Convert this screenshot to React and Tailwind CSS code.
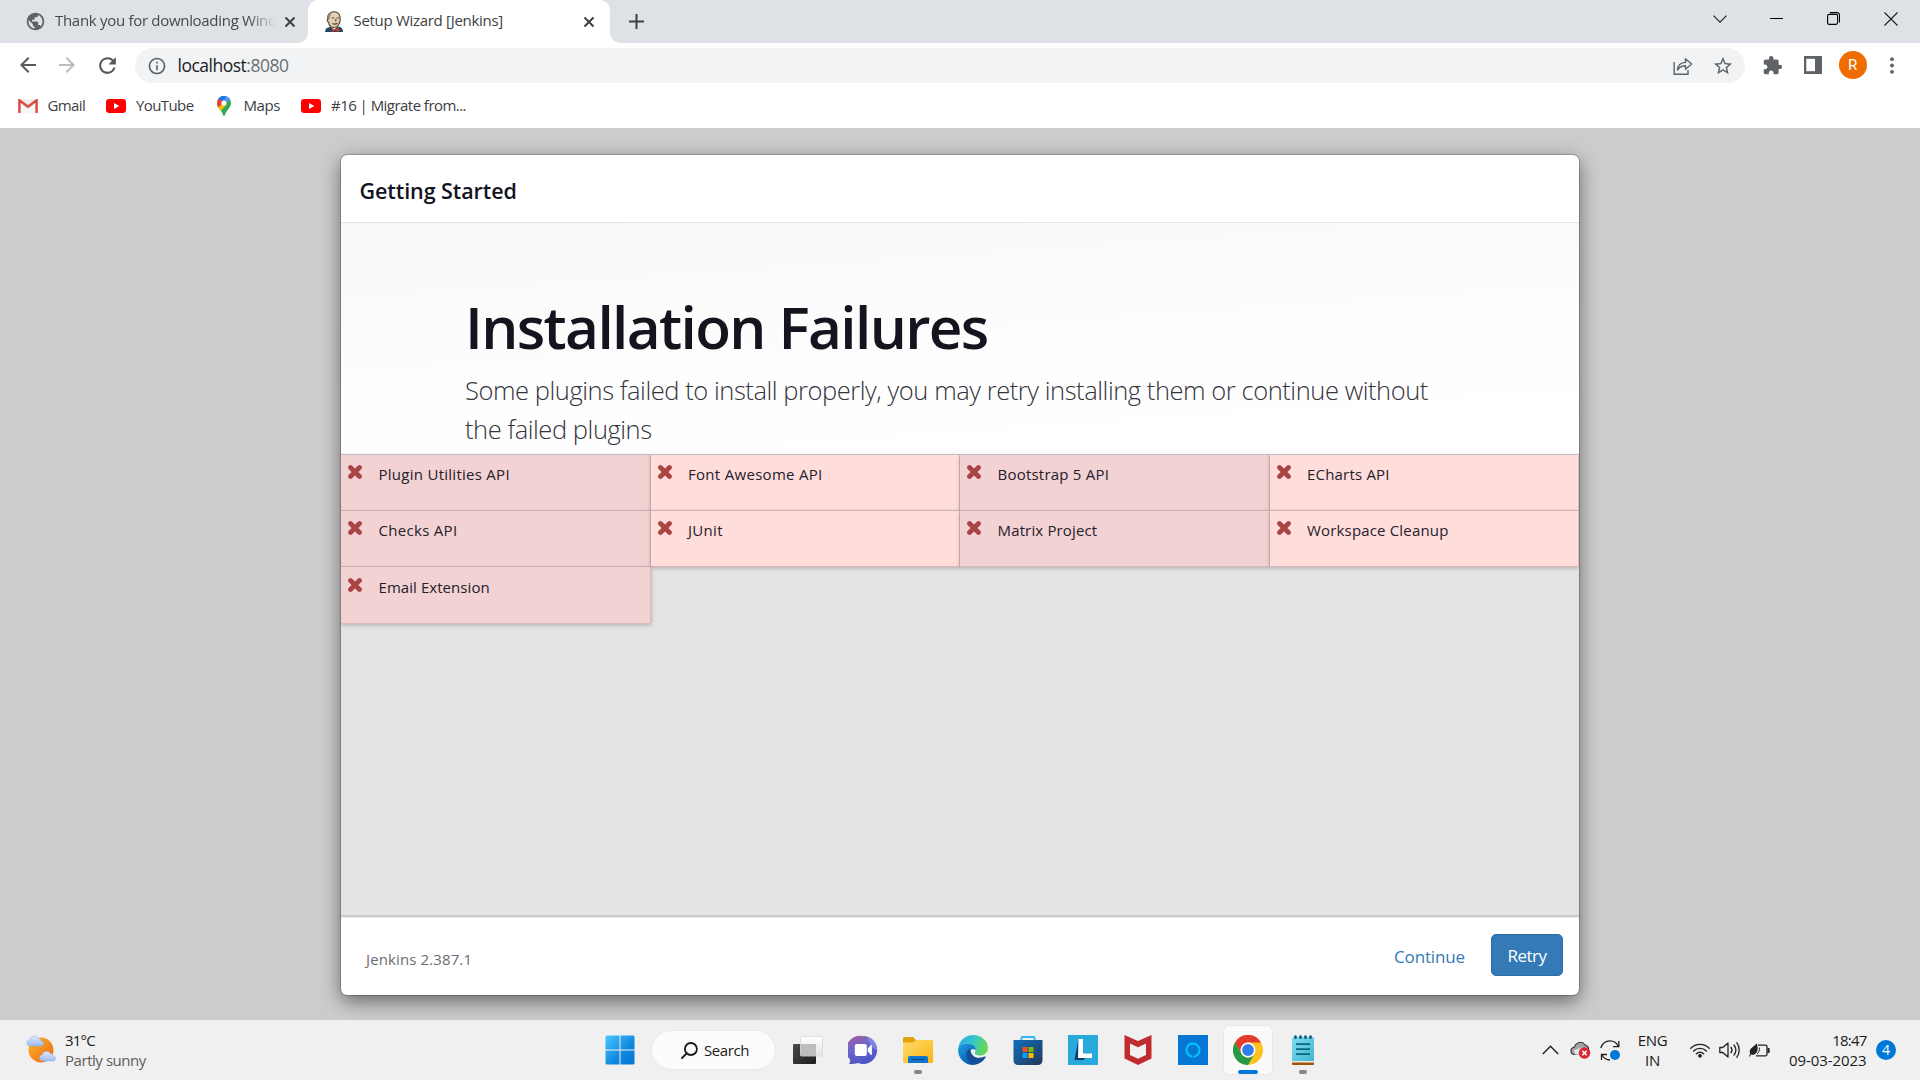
import React from 'react';
import { MdArrowBack, MdArrowForward, MdRefresh, MdInfoOutline, MdPublic, MdStarBorder, MdExtension } from 'react-icons/md';

/* ---------- Browser icons ---------- */

const CloseX = () => (
  <svg width="12" height="12" viewBox="0 0 12 12" fill="none" stroke="#3c4043" strokeWidth="2">
    <path d="M1.500 1.500l9 9M10.500 1.500l-9 9" />
  </svg>
);

const JenkinsFace = () => (
  <svg width="20" height="21" viewBox="0 0 20 21">
    <path d="M1 21c0-3 2-4.500 5-5l8-.5c3 .5 5 2 5 5.500z" fill="#274a5a" />
    <path d="M6 15l4 4 4-4-1-2H7z" fill="#f4f4f0" />
    <path d="M3.500 8.500C3 3.500 6 .8 10 .8s6.600 2.700 6.200 7.500c-.1 4.500-2.500 8-6 8.200-3.700 0-5.400-3-5.700-5.500-1.200-.3-1.500-2-1-2.500z" fill="#e6cfb0" stroke="#443c36" strokeWidth="1.100" />
    <path d="M3.500 8.500C2.800 4 5 1.200 9 .9 6.500 2.500 6 5 5.500 8.500z" fill="#8c8378" />
    <path d="M8 7h2.200M12.500 7h2.200M8.500 12.500c1.500.8 3.500.8 4.800-.2M11.800 8v2.500" stroke="#443c36" strokeWidth="1.100" fill="none" />
    <path d="M8 17l3 1.600 4-2v4.400l-4-1.400-3 1.400z" fill="#d33833" />
  </svg>
);

const Gmail = () => (
  <svg width="20" height="14" viewBox="0 0 20 14">
    <rect x="1" y="0.500" width="18" height="13" fill="#ececec" />
    <path d="M3 14V5l7 5 7-5v9z" fill="#f6f6f6" />
    <path d="M1.400 14V1.200L10 7.800l8.600-6.600V14" fill="none" stroke="#dd4b3e" strokeWidth="2.400" />
  </svg>
);

const YouTube = () => (
  <svg width="20" height="14" viewBox="0 0 20 14">
    <rect width="20" height="14" rx="3.200" fill="#f00" />
    <path d="M8 4l5.400 3L8 10z" fill="#fff" />
  </svg>
);

const MapsPin = () => (
  <svg width="14" height="20" viewBox="0 0 14 20">
    <clipPath id="pin"><path d="M7 0a7 7 0 0 1 7 7c0 3-1.600 4.900-3.300 7-1.500 1.800-2.400 3.500-2.800 5.200-.3 1.100-1.500 1.100-1.800 0C5.700 17.500 4.800 15.800 3.300 14 1.600 11.900 0 10 0 7a7 7 0 0 1 7-7z" /></clipPath>
    <g clipPath="url(#pin)">
      <rect width="14" height="20" fill="#34a853" />
      <path d="M0 0h14v3L7 7 1.500 2.500z" fill="#4285f4" />
      <path d="M9 0h5v5L9.500 5z" fill="#5b97f5" />
      <path d="M0 1.500L1.800 2.300 7 7l-5.600 5.500L0 11z" fill="#ea4335" />
      <path d="M7 7l2 2-6.500 7.500L0 12z" fill="#fbbc04" />
      <path d="M0 0h9L5 5 1.500 2.500z" fill="#1a73e8" />
    </g>
    <circle cx="7" cy="7" r="2.600" fill="#fff" />
  </svg>
);

const Share = () => (
  <svg width="20" height="18" viewBox="0 0 20 18" fill="none" stroke="#5f6368" strokeWidth="1.400">
    <path d="M1.200 5v12.200H15V13" />
    <path d="M4.500 13c.3-4.500 3-7.300 8-7.600V1.700L18.600 7l-6.100 5.200V8.800c-3.600 0-6 1.200-8 4.200z" strokeLinejoin="round" />
  </svg>
);

const SidePanel = () => (
  <svg width="18" height="18" viewBox="0 0 18 18">
    <path d="M0 0h18v18H0z" fill="#5f6368" />
    <path d="M2.300 2.800h8.700v12.400H2.300z" fill="#fff" />
  </svg>
);

/* ---------- Taskbar icons ---------- */

const Weather = () => (
  <svg width="30" height="28" viewBox="0 0 30 28">
    <defs>
      <linearGradient id="sun" x1="0" y1="0" x2="1" y2="1"><stop offset="0" stopColor="#fbb72c" /><stop offset="1" stopColor="#ee6510" /></linearGradient>
      <linearGradient id="cloud" x1="0" y1="0" x2="0" y2="1"><stop offset="0" stopColor="#dfe9fb" /><stop offset="1" stopColor="#9dbbf0" /></linearGradient>
    </defs>
    <circle cx="15" cy="15" r="12.500" fill="url(#sun)" />
    <path d="M3.500 11a3.200 3.200 0 0 1 .2-6.300C5 0 11 .2 12.300 3.500c2 0 2.700 1.300 2.700 2.500 3.500.3 3.200 5 0 5z" fill="url(#cloud)" stroke="#88a9e6" strokeWidth=".5" />
    <path d="M16 26a3.200 3.200 0 0 1 .2-6.300c1.300-4.400 6.600-4.200 8.100-1.200 2 0 2.500 1.300 2.700 2.500 3.500.3 3 5 0 5z" fill="url(#cloud)" stroke="#88a9e6" strokeWidth=".5" />
  </svg>
);

const WindowsLogo = () => (
  <svg width="30" height="30" viewBox="0 0 30 30">
    <defs><linearGradient id="win" gradientUnits="userSpaceOnUse" x1="0" y1="0" x2="30" y2="30"><stop offset="0" stopColor="#4cc8fb" /><stop offset=".6" stopColor="#0f87e0" /><stop offset="1" stopColor="#0574d2" /></linearGradient></defs>
    <path d="M2 .5h12.500v14H.5V2A1.500 1.500 0 0 1 2 .5zM15.500.5H28A1.500 1.500 0 0 1 29.500 2v12.500h-14zM.5 15.500h14v14H2A1.500 1.500 0 0 1 .5 28zM15.500 15.500h14V28a1.500 1.500 0 0 1-1.500 1.500H15.500z" fill="url(#win)" />
  </svg>
);

const TaskView = () => (
  <svg width="30" height="28" viewBox="0 0 30 28">
    <defs>
      <linearGradient id="tvd" x1="0" y1="0" x2="1" y2="1"><stop offset="0" stopColor="#4a4a48" /><stop offset="1" stopColor="#1d1d1d" /></linearGradient>
      <linearGradient id="tvl" x1="0" y1="0" x2="0" y2="1"><stop offset="0" stopColor="#fff" /><stop offset="1" stopColor="#e2e2e2" /></linearGradient>
    </defs>
    <rect x="0" y="8" width="23" height="20" rx="1" fill="url(#tvd)" />
    <rect x="7.500" y="0.500" width="22" height="19.500" rx="1" fill="url(#tvl)" stroke="#d8d8d8" strokeWidth=".8" />
    <path d="M8 8h15v12H8z" fill="#bdbdbd" />
  </svg>
);

const Chat = () => (
  <svg width="30" height="30" viewBox="0 0 30 30">
    <defs><linearGradient id="chat" x1=".1" y1="0" x2=".5" y2="1"><stop offset="0" stopColor="#a35f9d" /><stop offset=".5" stopColor="#6a66cc" /><stop offset="1" stopColor="#4f55c5" /></linearGradient></defs>
    <path d="M15 1a14 14 0 1 1-5 27c-2.500.8-5 1-8.800 1 .8-1.500 1-3 .8-4.500A14 14 0 0 1 15 1z" fill="url(#chat)" />
    <path d="M19 1.500A14 14 0 0 1 29 15c-4-1-8-6-10-13.500z" fill="#8093ee" opacity=".75" />
    <rect x="6.800" y="9" width="12" height="12" rx="2" fill="#fff" />
    <path d="M20.300 13.500l3-3.300v9.600l-3-3.300z" fill="#fff" stroke="#fff" strokeLinejoin="round" />
  </svg>
);

const Folder = () => (
  <svg width="30" height="28" viewBox="0 0 30 28">
    <defs><linearGradient id="fold" x1="0" y1="0" x2="1" y2="1"><stop offset="0" stopColor="#ffdc70" /><stop offset="1" stopColor="#fbb50d" /></linearGradient></defs>
    <path d="M0 8V2.500A1.500 1.500 0 0 1 1.500 1H10l3 3h15.500A1.500 1.500 0 0 1 30 5.500V8z" fill="#e2a009" />
    <path d="M0 6.500h10L13.500 4H30v22a1 1 0 0 1-1 1H1a1 1 0 0 1-1-1z" fill="url(#fold)" />
    <path d="M5 27v-5a2 2 0 0 1 2-2h16a2 2 0 0 1 2 2v5z" fill="#1276cf" />
    <path d="M8.500 23.500h13" stroke="#0a4f93" strokeWidth="1.300" />
  </svg>
);

const Edge = () => (
  <svg width="30" height="30" viewBox="0 0 30 30">
    <defs>
      <linearGradient id="e1" x1="0" y1=".2" x2="1" y2=".5"><stop offset="0" stopColor="#27a7e8" /><stop offset=".5" stopColor="#36c9cb" /><stop offset="1" stopColor="#68d84c" /></linearGradient>
      <linearGradient id="e2" x1="0" y1="0" x2=".6" y2="1"><stop offset="0" stopColor="#1d9fe4" /><stop offset="1" stopColor="#0b5cae" /></linearGradient>
    </defs>
    <path d="M.3 13C1.300 5.500 7.500 0 15 0c8.500 0 15 6.200 15 12.800 0 4.500-3.300 7.700-7.600 7.700-3.400 0-5.700-1.200-5.700-2.600 0-.8 1.100-1.300 1.100-3.400 0-3.800-4-6-8.800-6C5 8.500 2 10.300.3 13z" fill="url(#e1)" />
    <path d="M.1 15C.3 11 4 8.500 9 8.500c4.800 0 8.800 2.200 8.800 6 0 .3 0 .6-.1.900C16.500 13.800 11 13.500 10 18.500c-.8 5 3.500 9.800 8 10.800-1 .5-2 .7-3 .7C6.500 30 0 23 .1 15z" fill="url(#e2)" />
    <path d="M12.500 13c-3.500 2-4.800 5.500-4 8.500 1 4.500 5 8 9.500 7.900 4-1 7.500-3.600 9.500-7 .4-.8-.3-1.200-1-.9-7 3.300-14.500.3-14-8.500z" fill="#134e96" />
  </svg>
);

const Store = () => (
  <svg width="30" height="30" viewBox="0 0 30 30">
    <defs><linearGradient id="store" x1="0" y1="0" x2="1" y2="1"><stop offset="0" stopColor="#0d6fbf" /><stop offset="1" stopColor="#243757" /></linearGradient></defs>
    <path d="M8.300 6V3.500A1.500 1.500 0 0 1 9.800 2h10.400a1.500 1.500 0 0 1 1.500 1.500V6" fill="none" stroke="#2cb5f4" strokeWidth="1.800" />
    <path d="M.5 5h29v20.500a4.500 4.500 0 0 1-4.500 4.500H5a4.500 4.500 0 0 1-4.500-4.500z" fill="url(#store)" />
    <path d="M9.500 12h5v5h-5z" fill="#f25022" /><path d="M15.500 12h5v5h-5z" fill="#7fba00" />
    <path d="M9.500 18h5v5h-5z" fill="#00a4ef" /><path d="M15.500 18h5v5h-5z" fill="#ffb900" />
  </svg>
);

const LenovoL = () => (
  <svg width="30" height="30" viewBox="0 0 30 30">
    <path d="M0 0h30v30H0z" fill="#27aadb" />
    <path d="M10.500 4L6.500 25h9l2-2.500H11z" fill="#0f3b68" />
    <path d="M10.500 4H15v14.500h9V23H10z" fill="#fff" />
  </svg>
);

const McAfee = () => (
  <svg width="28" height="30" viewBox="0 0 28 30">
    <path d="M.5 0L14 6 27.500 0v23.500L14 30 .5 23.500zM6 8.500V20l8 3.800 8-3.800V8.500l-8 3.800z" fill="#bf2b2e" fillRule="evenodd" />
  </svg>
);

const Alexa = () => (
  <svg width="30" height="30" viewBox="0 0 30 30">
    <path d="M0 0h30v30H0z" fill="#0578d6" />
    <path d="M14.200 21.500a6.500 6.500 0 1 1 2.600-.2l-1.300 1" fill="none" stroke="#05c8fb" strokeWidth="1.900" />
  </svg>
);

const Chrome = () => (
  <svg width="30" height="30" viewBox="0 0 30 30">
    <circle cx="15" cy="15" r="15" fill="#fcc31e" />
    <path d="M2 7.500A15 15 0 0 1 28 7.500H15A7.500 7.500 0 0 0 8.500 18.750z" fill="#e33b2e" />
    <path d="M2 7.500A15 15 0 0 0 15 30L21.500 18.750A7.500 7.500 0 0 1 8.500 18.750z" fill="#279847" />
    <circle cx="15" cy="15" r="7.400" fill="#fff" />
    <circle cx="15" cy="15" r="5.900" fill="#2f7ced" />
  </svg>
);

const Notepad = () => (
  <svg width="22" height="30" viewBox="0 0 22 30">
    <defs><linearGradient id="note" x1="0" y1="0" x2="1" y2="1"><stop offset="0" stopColor="#80dcee" /><stop offset="1" stopColor="#3fb6d3" /></linearGradient></defs>
    <path d="M0 26h22v3a1 1 0 0 1-1 1H1a1 1 0 0 1-1-1z" fill="#a1520b" />
    <path d="M0 25h22v2.500H0z" fill="#f3ead9" />
    <path d="M0 3.500A1.500 1.500 0 0 1 1.500 2h19A1.500 1.500 0 0 1 22 3.500V26H0z" fill="url(#note)" />
    <path d="M3.500 1.500v1.200M8.500 1.500v1.200M13.500 1.500v1.200M18.500 1.500v1.200" stroke="#0d5a74" strokeWidth="2.600" strokeLinecap="round" />
    <path d="M4 9.200h14M4 14.200h14M4 19.200h14" stroke="#0b6680" strokeWidth="1.700" />
  </svg>
);

const CloudError = () => (
  <svg width="21" height="18" viewBox="0 0 21 18">
    <path d="M5 13.500C0 13.500-.5 7 4.200 6.200 6 1 12.500-.5 15 4c3.500.5 4.500 4 3 7z" fill="#a3a3a3" stroke="#333" strokeWidth="1.100" />
    <path d="M4 9l9-2.500 4 3-3 4H5z" fill="#e6e6e6" />
    <circle cx="14.500" cy="12" r="5.800" fill="#d92632" />
    <path d="M12.300 9.800l4.400 4.400M16.700 9.800l-4.400 4.400" stroke="#fff" strokeWidth="1.500" />
  </svg>
);

const Sync = () => (
  <svg width="20" height="21" viewBox="0 0 20 21" fill="none" stroke="#222" strokeWidth="1.300">
    <path d="M.8 8C2.500 2.500 6 .8 10 .8c4 0 7 2.500 8.500 5.700M18.800 1v5.700H13" />
    <path d="M1.500 20v-5.500H7M2 15c1.500 3 4.500 4.800 8 5" />
    <circle cx="15" cy="15" r="5" fill="#0078d7" stroke="none" />
  </svg>
);

const Wifi = () => (
  <svg width="20" height="16" viewBox="0 0 20 16" fill="none" stroke="#222" strokeWidth="1.400" strokeLinecap="round">
    <path d="M.8 6.200a13 13 0 0 1 18.400 0M3.600 9a9 9 0 0 1 12.800 0M6.400 11.700a5.100 5.100 0 0 1 7.200 0" />
    <circle cx="10" cy="13.800" r="1.200" fill="#222" stroke="#222" />
  </svg>
);

const Speaker = () => (
  <svg width="21" height="18" viewBox="0 0 21 18" fill="none" stroke="#222" strokeWidth="1.300" strokeLinecap="round" strokeLinejoin="round">
    <path d="M.8 6.500v5h3L9 16V2L3.800 6.500z" />
    <path d="M12 6.300c1.200 1.600 1.200 3.800 0 5.400M15 4c2.300 3 2.300 7 0 10M17.800 1.700c3.200 4.300 3.200 10.300 0 14.600" />
  </svg>
);

const Battery = () => (
  <svg width="21" height="15" viewBox="0 0 21 15">
    <path d="M9 2.200h7.500a1.500 1.500 0 0 1 1.500 1.500v7.600a1.500 1.500 0 0 1-1.500 1.500H7" fill="none" stroke="#222" strokeWidth="1.300" />
    <path d="M18.500 5h1.200a1 1 0 0 1 1 1v3a1 1 0 0 1-1 1h-1.200z" fill="#222" />
    <path d="M7.800.3c1.200 4 1.500 9.500-2.600 11.300-1.300.5-2.500.2-3.200-.3L.8 14l-.6-1 1-2.400C-.8 5.500 4.500 4.500 7.800.3z" fill="#222" />
    <path d="M10.300 4.500c.3 3-.4 5-2.300 6.500" stroke="#222" fill="none" />
  </svg>
);

/* ---------- Data ---------- */

const plugins = [
  ['Plugin Utilities API', 'tracking-[0.27px]'],
  ['Font Awesome API', 'tracking-[0.3px]'],
  ['Bootstrap 5 API', 'tracking-[0.22px]'],
  ['ECharts API', 'tracking-[0.2px]'],
  ['Checks API', 'tracking-[0.3px]'],
  ['JUnit', 'tracking-[0.3px]'],
  ['Matrix Project', 'tracking-[0.15px]'],
  ['Workspace Cleanup', 'tracking-[0.17px]'],
  ['Email Extension', 'tracking-[0.06px]'],
];

const FailedMark = () => (
  <svg className="mt-px shrink-0" width="14" height="14" viewBox="0 0 14 14" stroke="#a94442" strokeWidth="4.700" strokeLinecap="round">
    <path d="M2.500 2.500l9 9M11.500 2.500l-9 9" />
  </svg>
);

/* ---------- Regions ---------- */

function TabBar() {
  return (
    <div className="flex h-[43px] bg-[#dee1e6]">
      <div className="flex w-[308px] items-center pl-[26px]">
        <MdPublic size={21} color="#5f6368" className="-ml-px" />
        <div className="-mt-[2px] ml-[9px] w-[225px] whitespace-nowrap text-[15px] tracking-[-0.3px] text-[#45494d] [mask-image:linear-gradient(to_right,#000_86%,transparent_98%)]">
          Thank you for downloading Wind
        </div>
        <div className="ml-[4px]"><CloseX /></div>
      </div>
      <div className="relative flex w-[302px] items-center rounded-t-[10px] bg-white pl-[16px]">
        <span className="absolute -left-[10px] bottom-0 size-[10px] bg-[radial-gradient(circle_at_0_0,transparent_9.5px,#fff_10px)]" />
        <span className="absolute -right-[10px] bottom-0 size-[10px] bg-[radial-gradient(circle_at_100%_0,transparent_9.5px,#fff_10px)]" />
        <JenkinsFace />
        <span className="-mt-[2px] ml-[9.500px] grow text-[15px] tracking-[-0.3px] text-[#3c4043]">Setup Wizard [Jenkins]</span>
        <div className="mr-[15px]"><CloseX /></div>
      </div>
      <svg className="ml-[18.500px] mt-[14px]" width="15" height="15" viewBox="0 0 15 15" stroke="#3c4043" strokeWidth="2"><path d="M7.500 0v15M0 7.500h15" /></svg>
      <div className="ml-auto mr-[22px] flex h-[37px] items-center text-[#1b1b1b]">
        <svg width="14" height="8" viewBox="0 0 14 8" fill="none" stroke="currentColor" strokeWidth="1.100"><path d="M.5.7L7 7.200 13.500.7" /></svg>
        <svg className="ml-[43px]" width="13" height="13" viewBox="0 0 13 13" stroke="#000" strokeWidth="1"><path d="M0 6.500h13" /></svg>
        <svg className="ml-[44px]" width="13" height="13" viewBox="0 0 13 13" fill="none" stroke="#000" strokeWidth="1.100">
          <rect x=".6" y="2.400" width="10" height="10" rx="1.600" /><path d="M2.800.6h7.400a2.300 2.300 0 0 1 2.300 2.300v7.600" />
        </svg>
        <svg className="ml-[44px]" width="14" height="14" viewBox="0 0 14 14" stroke="currentColor" strokeWidth="1.100"><path d="M.5.5l13 13M13.500.5l-13 13" /></svg>
      </div>
    </div>
  );
}

function Toolbar() {
  return (
    <div className="flex h-[45px] items-center">
      <MdArrowBack size={24} color="#55595e" className="-mt-px ml-[15.500px] shrink-0" />
      <MdArrowForward size={24} color="#babcbe" className="-mt-px ml-[15.500px] shrink-0" />
      <MdRefresh size={25} color="#55595e" className="-mt-px ml-[16px] shrink-0" />
      <div className="ml-[15px] flex h-[35px] w-[1610px] items-center rounded-full bg-[#f1f3f4] pl-[12px]">
        <MdInfoOutline size={20} color="#5f6368" />
        <span className="ml-[10.500px] text-[17.5px] tracking-[-0.5px] text-[#202124]">localhost<span className="text-[#6b6f73]">:8080</span></span>
        <div className="ml-auto mr-[11.500px] flex items-center gap-[18.500px]">
          <Share />
          <MdStarBorder size={22} color="#5f6368" />
        </div>
      </div>
      <MdExtension size={21} color="#5f6368" className="ml-[17px]" />
      <div className="-mt-px ml-[20.500px]"><SidePanel /></div>
      <div className="-mt-px ml-[17px] flex size-[28px] items-center justify-center rounded-full bg-[#ef6c00] font-['Roboto',sans-serif] text-[15px] text-white">R</div>
      <svg className="-mt-px ml-[23.500px]" width="4" height="17" viewBox="0 0 4 17" fill="#5f6368"><circle cx="2" cy="2.200" r="1.900" /><circle cx="2" cy="8.500" r="1.900" /><circle cx="2" cy="14.800" r="1.900" /></svg>
    </div>
  );
}

function Bookmarks() {
  return (
    <div className="flex h-[41px] items-center border-b border-[#c8c8c8] pb-[4px] pl-[18px] text-[15px] text-[#3c4043]">
      <Gmail /><span className="-mt-[2px] ml-[9.500px] w-[58.500px] tracking-[-0.6px]">Gmail</span>
      <YouTube /><span className="-mt-[2px] ml-[10px] w-[81px] tracking-[-0.6px]">YouTube</span>
      <MapsPin /><span className="-mt-[2px] ml-[12.500px] w-[57.500px] tracking-[-0.4px]">Maps</span>
      <YouTube /><span className="-mt-[2px] ml-[10px] tracking-[-0.54px]">#16 | Migrate from...</span>
    </div>
  );
}

function SetupDialog() {
  return (
    <div className="flex h-[840px] w-[1238px] flex-col overflow-hidden rounded-[6px] bg-white text-[#14141f] shadow-[0_0_0_1px_rgba(0,0,0,0.2),0_6px_19px_rgba(0,0,0,0.5)]">
      <div className="flex h-[68px] shrink-0 items-center border-b border-[#e3e3e3] pl-[18.500px] pt-[6px] text-[21.5px] font-semibold tracking-[-0.08px]">Getting Started</div>
      <div className="h-[231px] shrink-0 bg-[linear-gradient(176deg,#f8f8f8_0%,#fefefe_65%,#fff_100%)] pl-[124px] pt-[70px]">
        <h1 className="text-[58.5px] font-semibold leading-[66px] tracking-[-1.63px]">Installation Failures</h1>
        <p className="mt-[12px] w-[980px] text-[25.5px] font-light leading-[39px] tracking-[-0.445px] text-[#34343d]">
          Some plugins failed to install properly, you may retry installing them or continue without<br />the failed plugins
        </p>
      </div>
      <div className="h-[463px] shrink-0 border-b-2 border-t border-b-[#cacaca] border-t-[#c9c9c9] bg-[#e4e4e4]">
        <div className="grid grid-cols-4 grid-rows-[56px_56px_57px]">
          {plugins.map(([name, tracking], i) => (
            <div key={name} className={`flex items-start border-b border-r border-[#dcb9ba] pl-[7px] shadow-[0_1px_4px_rgba(0,0,0,0.25)] ${i % 2 ? 'bg-[#ffdddb]' : 'bg-[#f2d2d3]'} ${i > 7 ? 'pt-[10px]' : 'pt-[9px]'}`}>
              <FailedMark />
              <span className={`ml-[16.500px] text-[15px] leading-[20px] text-[#25202b] ${tracking}`}>{name}</span>
            </div>
          ))}
        </div>
      </div>
      <div className="flex grow items-center border-t border-[#ededed] pl-[25px] pr-[16px]">
        <span className="mt-[6px] text-[15px] tracking-[0.12px] text-[#6c6c72]">Jenkins 2.387.1</span>
        <span className="ml-auto mr-[26px] text-[17px] tracking-[-0.14px] text-[#337ab7]">Continue</span>
        <button className="-mt-[4px] h-[42px] w-[72px] rounded-[5px] border border-[#2e6da4] bg-[#337ab7] pt-[3px] text-[17px] tracking-[-0.55px] text-white">Retry</button>
      </div>
    </div>
  );
}

const Slot = ({ children, dot }) => (
  <div className="relative flex h-[60px] w-[55px] items-center justify-center">
    {children}
    {dot && <span className="absolute bottom-[6px] left-[23.500px] h-[4px] w-[8px] rounded-full bg-[#858585]" />}
  </div>
);

function Taskbar() {
  return (
    <div className="flex h-[60px] items-center bg-[#f0f0f0] text-[15px] leading-[20px] text-[#1b1b1b]">
      <div className="flex w-[591px] items-center pl-[26px]">
        <div className="-mt-[2px]"><Weather /></div>
        <div className="ml-[9px]">
          <div className="tracking-[-0.8px]">31°C</div>
          <div className="tracking-[-0.45px] text-[#5d5d5d]">Partly sunny</div>
        </div>
      </div>
      <div className="flex w-[57px] justify-center"><WindowsLogo /></div>
      <div className="ml-[4px] mr-[5.500px] flex h-[38px] w-[123px] items-center rounded-full bg-[#fbfbfb] pl-[29px] shadow-[0_0_0_1px_#e9e9e9]">
        <svg width="17" height="17" viewBox="0 0 17 17" fill="none" stroke="#1b1b1b" strokeWidth="1.800" strokeLinecap="round"><circle cx="9.900" cy="7" r="6" /><path d="M5.700 11.300L1 16" /></svg>
        <span className="ml-[6px] tracking-[-0.42px]">Search</span>
      </div>
      <Slot><TaskView /></Slot>
      <Slot><Chat /></Slot>
      <Slot dot><Folder /></Slot>
      <Slot><Edge /></Slot>
      <Slot><Store /></Slot>
      <Slot><LenovoL /></Slot>
      <Slot><McAfee /></Slot>
      <Slot><Alexa /></Slot>
      <Slot>
        <div className="relative flex size-[48px] shrink-0 items-center justify-center rounded-[5px] bg-[#fafafa] shadow-[0_0_0_1px_#e8e8e8]">
          <Chrome />
          <span className="absolute bottom-0 left-[14px] h-[4px] w-[20px] rounded-full bg-[#0078d7]" />
        </div>
      </Slot>
      <Slot dot><Notepad /></Slot>
      <div className="ml-auto flex w-[378px] items-center">
        <svg width="17" height="10" viewBox="0 0 17 10" fill="none" stroke="#222" strokeWidth="1.400"><path d="M.8 9L8.500 1.200 16.200 9" /></svg>
        <div className="ml-[11px]"><CloudError /></div>
        <div className="ml-[9px]"><Sync /></div>
        <div className="ml-[10px] w-[45px] text-center tracking-[-0.3px]">ENG<br />IN</div>
        <div className="ml-[15px]"><Wifi /></div>
        <div className="ml-[9px]"><Speaker /></div>
        <div className="ml-[9px]"><Battery /></div>
        <div className="w-[96.500px] text-right">
          <div className="tracking-[-0.8px]">18:47</div>
          <div className="tracking-[-0.08px]">09-03-2023</div>
        </div>
        <div className="ml-[9.500px] flex size-[20px] items-center justify-center rounded-full bg-[#0078d7] text-[14px] text-white">4</div>
      </div>
    </div>
  );
}

export default function App() {
  return (
    <div className="flex h-[1080px] w-[1920px] flex-col overflow-hidden bg-white font-['Open_Sans','Noto_Sans',sans-serif]">
      <TabBar />
      <Toolbar />
      <Bookmarks />
      <main className="flex h-[891px] justify-center overflow-hidden bg-[#ccc] pt-[26px]"><SetupDialog /></main>
      <Taskbar />
    </div>
  );
}
